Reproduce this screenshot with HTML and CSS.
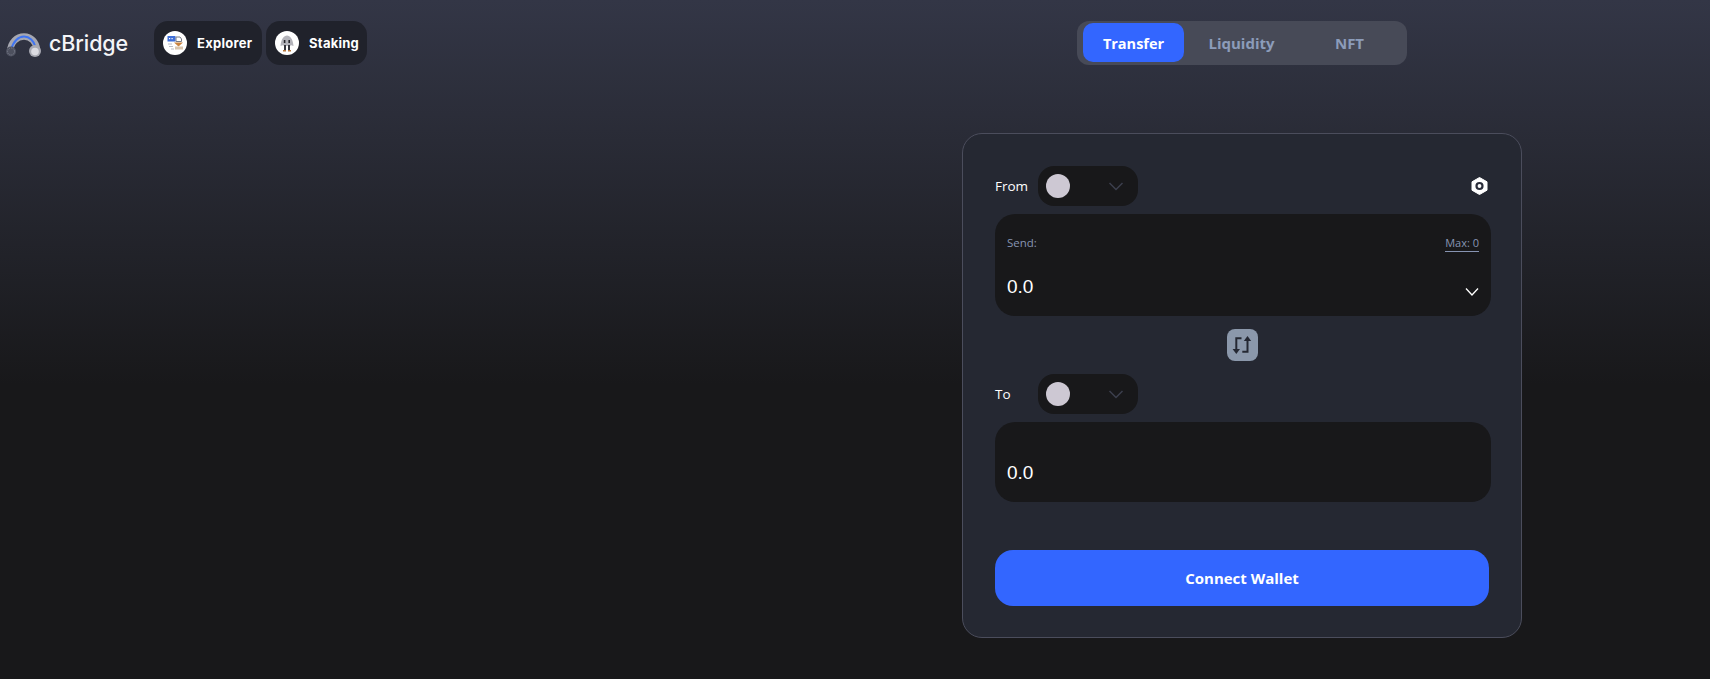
FILE: index.html
```html
<!DOCTYPE html>
<html lang="en">
<head>
<meta charset="utf-8">
<title>cBridge</title>
<link rel="stylesheet" href="styles.css">
</head>
<body>
<div class="page">
  <header class="topnav">
    <a class="logo">
      <svg class="logo-mark" width="38" height="24" viewBox="0 0 38 24">
        <path d="M5 19C5.500 9 12 3.500 19 3.500C26 3.500 31.500 9 32 17" fill="none" stroke="#a6a7b0" stroke-width="6.500"/>
        <path d="M6.500 16C8 8.500 13.500 3.600 19 3.600C24.500 3.600 29 8 30.500 14" fill="none" stroke="#3f74f2" stroke-width="2"/>
        <circle cx="6" cy="18.500" r="5" fill="#4d505e"/>
        <circle cx="6" cy="18.500" r="3.500" fill="none" stroke="#7f8292" stroke-width="1" stroke-dasharray="1 1"/>
        <circle cx="30" cy="18" r="6" fill="#a9aab2"/>
        <circle cx="30" cy="18.500" r="3.800" fill="#dcdce2"/>
      </svg>
      <span class="logo-text">cBridge</span>
    </a>
    <a class="pill pill-explorer">
      <span class="pill-icon">
        <svg width="24" height="24" viewBox="0 0 24 24">
          <circle cx="12" cy="12" r="12" fill="#fff"/>
          <rect x="4.500" y="5" width="8" height="5.500" fill="#3f6fd8"/>
          <rect x="6" y="7" width="1.200" height="1.200" fill="#fff"/>
          <rect x="8.500" y="7" width="1.200" height="1.200" fill="#fff"/>
          <path d="M13 6H17L18.500 8V10.500H13Z" fill="none" stroke="#777b86" stroke-width="1"/>
          <path d="M11 11.500H20L15.500 15.500Z" fill="#c9833f"/>
          <rect x="12" y="15.500" width="8" height="3" fill="#d9c5ad"/>
          <path d="M5 13H9M6 15.500H10M8 18H11" stroke="#b9bcc4" stroke-width="1"/>
        </svg>
      </span>
      <span class="pill-label">Explorer</span>
    </a>
    <a class="pill pill-staking">
      <span class="pill-icon">
        <svg width="24" height="24" viewBox="0 0 24 24">
          <circle cx="12" cy="12" r="12" fill="#fff"/>
          <path d="M5.500 15C6 8 9 4.500 12 4.500C15 4.500 18 8 18.500 15L15.500 14V15H8.500V14Z" fill="#b3b3ba"/>
          <rect x="8.800" y="9" width="1.600" height="3" fill="#26262c"/>
          <rect x="13.400" y="9" width="1.600" height="3" fill="#26262c"/>
          <rect x="9" y="14" width="2" height="6" fill="#33343c"/>
          <rect x="13" y="14" width="2" height="6" fill="#33343c"/>
          <rect x="8" y="19" width="3" height="1.500" fill="#b5763e"/>
          <rect x="13" y="19" width="3" height="1.500" fill="#b5763e"/>
        </svg>
      </span>
      <span class="pill-label">Staking</span>
    </a>
  </header>

  <main class="content">
    <nav class="tabs">
      <a class="tab tab-active">Transfer</a>
      <a class="tab">Liquidity</a>
      <a class="tab">NFT</a>
    </nav>

    <section class="card">
      <div class="chain-row">
        <span class="chain-label">From</span>
        <button class="chain-select">
          <span class="chain-dot"></span>
          <svg class="chevron" width="16" height="9" viewBox="0 0 16 9"><path d="M1.500 1L8 7.500L14.500 1" fill="none" stroke="#3c3f4e" stroke-width="1.500"/></svg>
        </button>
        <svg class="settings" width="17" height="18" viewBox="0 0 17 18">
          <path d="M8.500 0.500L16 4.800V13.200L8.500 17.500L1 13.200V4.800Z" fill="#fff" stroke="#fff" stroke-linejoin="round"/>
          <circle cx="8.500" cy="9" r="3" fill="none" stroke="#2b2e3b" stroke-width="2.200"/>
        </svg>
      </div>

      <div class="amount-panel amount-send">
        <div class="amount-top">
          <span class="send-label">Send:</span>
          <span class="max-label">Max: 0</span>
        </div>
        <div class="amount-bottom">
          <span class="amount-value">0.0</span>
          <svg width="14" height="10" viewBox="0 0 14 10"><path d="M1 1.500L7 8L13 1.500" fill="none" stroke="#fff" stroke-width="1.300"/></svg>
        </div>
      </div>

      <div class="swap-row">
        <button class="swap">
          <svg width="31" height="32" viewBox="0 0 31 32">
            <path d="M14.500 9.300H9.300V21" fill="none" stroke="#252833" stroke-width="2"/>
            <path d="M5.600 20H13L9.300 25Z" fill="#252833"/>
            <path d="M15.300 22.700H20.500V11" fill="none" stroke="#252833" stroke-width="2"/>
            <path d="M16.800 12H24.200L20.500 7Z" fill="#252833"/>
          </svg>
        </button>
      </div>

      <div class="chain-row">
        <span class="chain-label">To</span>
        <button class="chain-select">
          <span class="chain-dot"></span>
          <svg class="chevron" width="16" height="9" viewBox="0 0 16 9"><path d="M1.500 1L8 7.500L14.500 1" fill="none" stroke="#3c3f4e" stroke-width="1.500"/></svg>
        </button>
      </div>

      <div class="amount-panel amount-receive">
        <span class="amount-value">0.0</span>
      </div>

      <button class="connect">Connect Wallet</button>
    </section>
  </main>
</div>
</body>
</html>
```
FILE: styles.css
```css
* {
  box-sizing: border-box;
}

html,
body {
  margin: 0;
  height: 100%;
}

body {
  background: linear-gradient(180deg, #333646 0, #18181a 385px);
  background-repeat: no-repeat;
  background-color: #18181a;
  color: #fff;
  font-family: "Open Sans", "Liberation Sans", sans-serif;
  overflow: hidden;
}

.page {
  display: grid;
  grid-template-columns: 774px 1fr;
  height: 679px;
}

.topnav {
  display: flex;
  align-items: flex-start;
  padding-top: 21px;
  padding-left: 5px;
}

.logo {
  display: flex;
  align-items: center;
  height: 44px;
  margin-right: 26px;
}

.logo-mark {
  margin-top: 4px;
}

.logo-text {
  font-family: Inter, sans-serif;
  font-size: 21.500px;
  font-weight: 500;
  letter-spacing: -0.100px;
  margin-left: 6px;
  color: #f4f5f8;
}

.pill {
  display: flex;
  align-items: center;
  height: 44px;
  border-radius: 14px;
  background: #20222b;
  padding-left: 9px;
  margin-right: 4px;
}

.pill-explorer {
  width: 108px;
}

.pill-staking {
  width: 101px;
}

.pill-icon {
  display: flex;
  width: 24px;
  height: 24px;
}

.pill-label {
  font-family: Inter, sans-serif;
  font-size: 13px;
  font-weight: 700;
  letter-spacing: 0.250px;
  margin-left: 10px;
}

.content {
  display: flex;
  flex-direction: column;
  align-items: center;
  padding-top: 21px;
}

.tabs {
  display: flex;
  width: 330px;
  height: 44px;
  padding: 2px 6px 3px;
  gap: 7px;
  border-radius: 12px;
  background: #474a57;
}

.tab {
  display: flex;
  flex: 0 0 101px;
  align-items: center;
  justify-content: center;
  padding-top: 1px;
  border-radius: 10px;
  font-size: 15px;
  font-weight: 700;
  color: #8c9cba;
}

.tab-active {
  background: #3366ff;
  color: #fff;
  font-size: 14.500px;
}

.card {
  display: flex;
  flex-direction: column;
  width: 560px;
  height: 505px;
  margin-top: 68px;
  padding: 32px 32px 31px;
  border: 1px solid #4b4d5c;
  border-radius: 20px;
  background: #252832;
}

.chain-row {
  display: flex;
  align-items: center;
  height: 40px;
}

.chain-label {
  width: 43px;
  font-size: 13.500px;
  color: #fff;
}

.chain-select {
  display: flex;
  align-items: center;
  justify-content: space-between;
  width: 100px;
  height: 40px;
  padding: 0 14px 0 8px;
  border: 0;
  border-radius: 16px;
  background: #18181a;
}

.chain-dot {
  width: 24px;
  height: 24px;
  border-radius: 50%;
  background: #cdc8d3;
}

.chevron {
  margin-top: 1px;
}

.settings {
  margin-left: auto;
  margin-right: 1px;
  margin-top: -1px;
}

.amount-panel {
  display: flex;
  flex-direction: column;
  margin-top: 8px;
  margin-right: -2px;
  padding: 0 12px;
  border-radius: 20px;
  background: #18181a;
}

.amount-send {
  height: 102px;
  padding-top: 21px;
}

.amount-receive {
  height: 80px;
  justify-content: flex-end;
  padding-bottom: 17px;
}

.amount-top {
  display: flex;
  justify-content: space-between;
  line-height: 16px;
  color: #8794b2;
}

.send-label {
  font-size: 11.500px;
}

.max-label {
  padding-bottom: 1px;
  border-bottom: 1px solid #8794b2;
  font-size: 11px;
  line-height: 15px;
}

.amount-bottom {
  display: flex;
  align-items: flex-end;
  justify-content: space-between;
  margin-top: 23px;
}

.amount-bottom svg {
  margin-bottom: 2px;
}

.amount-value {
  font-family: "Liberation Sans", sans-serif;
  font-size: 19px;
  line-height: 24px;
}

.swap-row {
  display: flex;
  justify-content: center;
  height: 32px;
  margin-top: 13px;
  margin-bottom: 13px;
}

.swap {
  display: flex;
  width: 31px;
  height: 32px;
  padding: 0;
  border: 0;
  border-radius: 8px;
  background: #8b98ab;
}

.connect {
  height: 56px;
  margin-top: 48px;
  border: 0;
  border-radius: 18px;
  background: #3366ff;
  color: #fff;
  font-family: "Open Sans", sans-serif;
  font-size: 15px;
  font-weight: 700;
}
```
